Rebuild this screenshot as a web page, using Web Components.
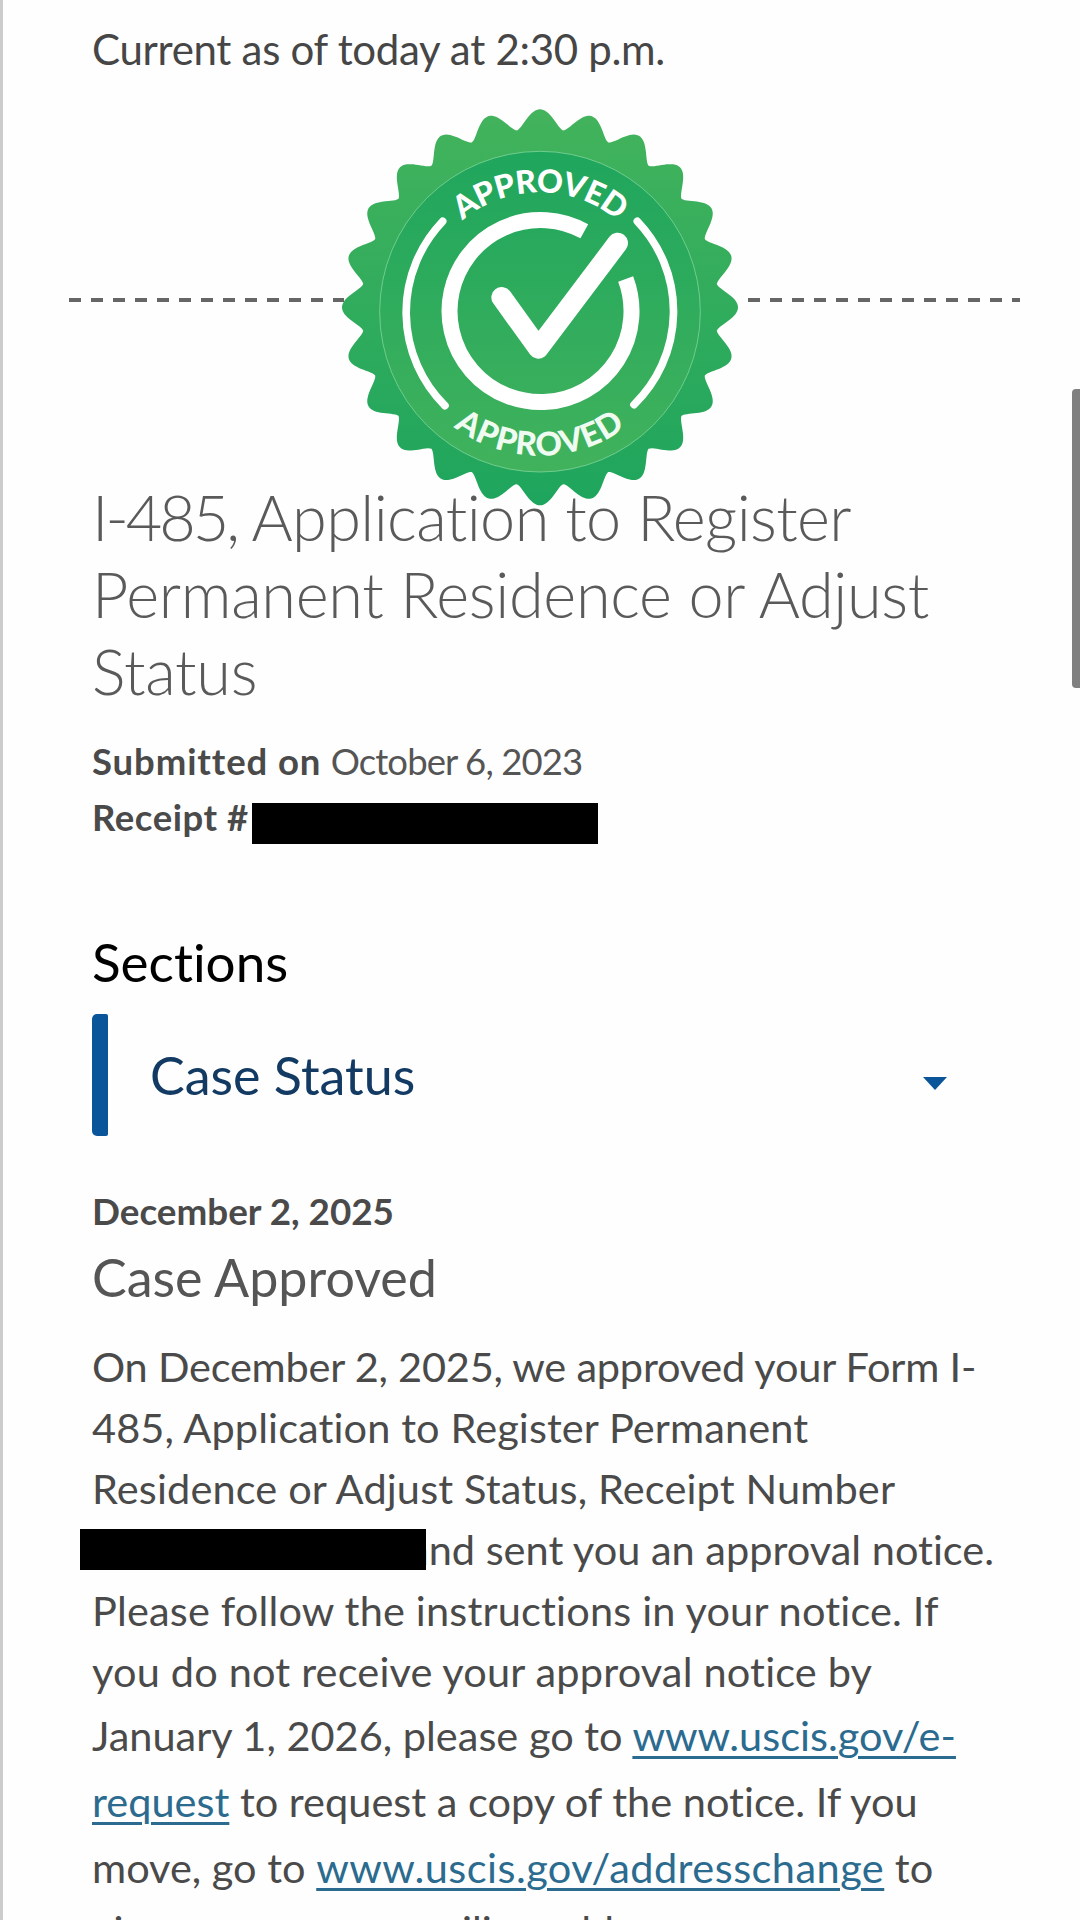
<!DOCTYPE html>
<html lang="en">
<head>
<meta charset="utf-8">
<title>Case status</title>
<style>
  html,body{margin:0;padding:0;background:#fefefe}
  body{width:1080px;height:1920px;overflow:hidden;font-family:Lato,"Open Sans",sans-serif;color:#4a4a4a;font-variant-ligatures:none}
</style>
</head>
<body>
<case-page>
  <case-stamp>Current as of today at 2:30 p.m.</case-stamp>
  <approved-seal></approved-seal>
  <case-summary submitted="October 6, 2023"></case-summary>
  <section-picker label="Case Status">Sections</section-picker>
  <case-history date="December 2, 2025" heading="Case Approved"></case-history>
</case-page>

<script>
/* every element keeps its own styles, the page only composes them */
function define(name, css, html) {
  customElements.define(name, class extends HTMLElement {
    connectedCallback() {
      if (this.shadowRoot) return;
      const root = this.attachShadow({ mode: 'open' });
      root.innerHTML = '<style>' + css + '</style>' + (typeof html === 'function' ? html(this) : html);
    }
  });
}

define('case-page', `
  :host{display:block;position:relative;box-sizing:border-box;width:1080px;height:1920px;overflow:hidden;border-left:3px solid #ccc;padding-left:89px}
  .thumb{position:absolute;top:389px;right:0;width:8px;height:299px;background:#808080;border-radius:4px 0 0 4px}
`, '<slot></slot><div class="thumb"></div>');

define('case-stamp', `
  :host{display:block;padding-top:20px;font-size:42px;line-height:58px;letter-spacing:-.3px;color:#464646}
`, '<slot></slot>');

// scalloped edge: 24 points, tips a bit broader than the valleys
function sealEdge(cx, cy, rTip, rValley) {
  const pts = [];
  for (let i = 0; i < 720; i++) {
    const a = i / 720 * Math.PI * 2;
    const f = Math.pow((1 + Math.cos(a * 24)) / 2, .75);
    const r = rValley + (rTip - rValley) * f;
    pts.push((cx + r * Math.sin(a)).toFixed(1) + ' ' + (cy - r * Math.cos(a)).toFixed(1));
  }
  return 'M' + pts.join('L') + 'Z';
}

define('approved-seal', `
  :host{display:block;position:relative;height:400px;margin-left:-23px;width:951px}
  .dash{position:absolute;top:220px;height:4px;background:repeating-linear-gradient(90deg,#666 0 12px,transparent 12px 22px)}
  .dash.l{left:0;width:275px}
  .dash.r{left:679px;right:0}
  svg{position:absolute;left:251px;top:16px;width:440px;height:430px;z-index:2}
  text{font-family:Lato,"Open Sans",sans-serif;font-weight:900;fill:#fff}
`, () => `
  <div class="dash l"></div>
  <div class="dash r"></div>
  <svg viewBox="0 0 1320 1290" aria-label="Approved seal">
    <defs>
      <linearGradient id="outer" x1="0" y1="0" x2="0" y2="1"><stop offset="0" stop-color="#43b35c"/><stop offset="1" stop-color="#1ea55d"/></linearGradient>
      <linearGradient id="inner" x1="0" y1="0" x2="0" y2="1"><stop offset="0" stop-color="#1fa65d"/><stop offset="1" stop-color="#41b25c"/></linearGradient>
      <path id="topArc" d="M300 655A360 360 0 0 1 1020 655"/>
      <path id="botArc" d="M228 653A432 432 0 0 0 1092 653"/>
    </defs>
    <path d="${sealEdge(660, 640, 594, 535)}" fill="url(#outer)"/>
    <circle cx="660" cy="653" r="481" fill="url(#inner)" stroke="#8fdca6" stroke-width="2"/>
    <path d="M368 382A395 395 0 0 0 375 935M952 382A390 390 0 0 1 942 932" fill="none" stroke="#fff" stroke-width="23" stroke-linecap="round"/>
    <path d="M917 555A273 273 0 1 1 793 412" fill="none" stroke="#fff" stroke-width="48"/>
    <path d="M545 610L655 763L893 447" fill="none" stroke="#fff" stroke-width="62" stroke-linecap="round" stroke-linejoin="round"/>
    <text text-anchor="middle" font-size="96" letter-spacing="-2"><textPath href="#topArc" startOffset="50%">APPROVED</textPath></text>
    <text text-anchor="middle" font-size="98" letter-spacing="3" style="fill:#effbf1"><textPath href="#botArc" startOffset="50%">APPROVED</textPath></text>
  </svg>`);

define('redact-bar', `
  :host{display:inline-block;background:#000;width:var(--w,346px);height:41px;vertical-align:top}
`, '');

define('case-summary', `
  :host{display:block}
  h1{margin:0;font-size:63px;line-height:77px;font-weight:300;color:#5a5a5a;letter-spacing:-.3px}
  h1 i{font-style:normal;letter-spacing:-3px}
  .first{letter-spacing:-.6px}
  p{margin:0;font-size:36.5px;line-height:56px;color:#555}
  .meta{margin-top:24px}
  b{font-weight:700;color:#4a4a4a;letter-spacing:.9px}
  .on{letter-spacing:-.9px}
  .row{display:flex;align-items:center;gap:3px}
  .row b{letter-spacing:.55px}
  .row redact-bar{margin-top:12px}
`, (el) => `
  <h1><span class="first"><i>I-485,</i> Application to Register</span><br>Permanent Residence or Adjust<br>Status</h1>
  <div class="meta">
    <p><b>Submitted on</b> <span class="on">${el.getAttribute('submitted')}</span></p>
    <p class="row"><b>Receipt #</b><redact-bar></redact-bar></p>
  </div>`);

define('section-picker', `
  :host{display:block;margin-top:87px}
  .title{font-size:53px;line-height:60px;color:#000}
  .pick{display:flex;align-items:center;margin-top:22px;height:122px;width:856px}
  .bar{width:16px;align-self:stretch;background:#0a5499;border-radius:5px 2px 2px 5px}
  .label{flex:1;padding-left:42px;font-size:52px;color:#123a63}
  svg{width:24px;height:13px;margin-top:16px;margin-right:1px}
`, (el) => `
  <div class="title"><slot></slot></div>
  <div class="pick">
    <div class="bar"></div>
    <div class="label">${el.getAttribute('label')}</div>
    <svg viewBox="0 0 24 13"><path d="M0 0H24L12 13Z" fill="#0a5499"/></svg>
  </div>`);

define('case-history', `
  :host{display:block;margin-top:50px}
  .date{font-size:36.8px;line-height:50px;font-weight:700;color:#4a4a4a}
  h2{margin:5px 0 0;font-size:52px;line-height:72px;font-weight:400;color:#555}
  .body{margin-top:23px;font-size:41.5px;color:#4a4a4a;white-space:nowrap}
  .l{display:block;line-height:61px;position:relative;letter-spacing:var(--ls,0)}
  .tall{line-height:66px}
  a{color:#2b6b8f;text-decoration:underline;text-underline-offset:5px;text-decoration-thickness:3px}
  .wide{letter-spacing:.46px}
  redact-bar{position:absolute;left:-12px;top:10px;z-index:1}
  .after{margin-left:316px;position:relative}
`, (el) => `
  <div class="date">${el.getAttribute('date')}</div>
  <h2>${el.getAttribute('heading')}</h2>
  <div class="body">
    <span class="l" style="--ls:-.22px">On December 2, 2025, we approved your Form I-</span>
    <span class="l" style="--ls:.1px">485, Application to Register Permanent</span>
    <span class="l" style="--ls:.14px">Residence or Adjust Status, Receipt Number</span>
    <span class="l"><redact-bar></redact-bar><span class="after">and sent you an approval notice.</span></span>
    <span class="l" style="--ls:.17px">Please follow the instructions in your notice. If</span>
    <span class="l" style="--ls:.17px">you do not receive your approval notice by</span>
    <span class="l tall">January 1, 2026, please go to <a href="#">www.uscis.gov/e-</a></span>
    <span class="l tall"><a href="#">request</a> to request a copy of the notice. If you</span>
    <span class="l tall">move, go to <a class="wide" href="#">www.uscis.gov/addresschange</a> to</span>
    <span class="l">give us your new mailing address.</span>
  </div>`);
</script>
</body>
</html>
